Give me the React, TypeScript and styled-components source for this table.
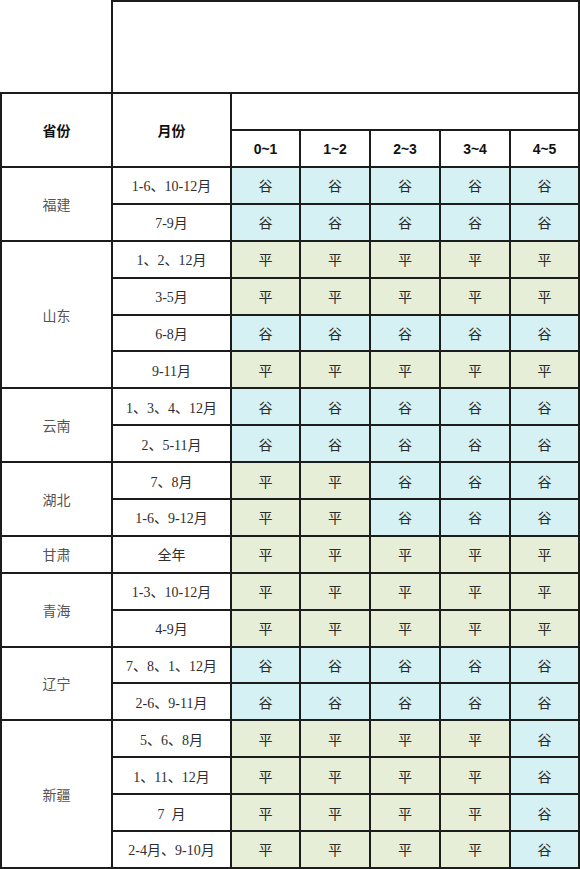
import React from "react";
import styled, { createGlobalStyle } from "styled-components";

const Global = createGlobalStyle`
  html, body { margin: 0; padding: 0; background: #ffffff; }
  body { width: 580px; overflow: hidden; }
`;

const Page = styled.div`
  width: 580px;
  display: flex;
  flex-direction: column;
`;

const TopBox = styled.div`
  margin-left: 111px;
  height: 90px;
  border: 2px solid #1c1c1c;
  border-bottom: none;
  background: #ffffff;
`;

const Grid = styled.div`
  display: grid;
  grid-template-columns: 109px 117px 67px 68px 68px 68px 67px;
  grid-template-rows: 35px 35px repeat(19, 34.9px);
  grid-auto-flow: row;
  gap: 2px;
  padding: 2px;
  background: #1c1c1c;
`;

const Cell = styled.div`
  display: flex;
  align-items: center;
  justify-content: center;
  background: #ffffff;
  font-family: "Liberation Serif", "Noto Sans CJK SC", serif;
  font-size: 14px;
  color: #2e2e2e;
  white-space: pre;
`;

const ValueCell = styled(Cell)<{ $tone: "gu" | "ping" }>`
  background: ${(p) => (p.$tone === "gu" ? "#d5f1f3" : "#e6eed8")};
  color: #2a2a2a;
`;

const HeadCell = styled(Cell)`
  font-family: "Liberation Sans", "Noto Sans CJK SC", sans-serif;
  font-weight: 700;
  color: #111111;
`;

const TallHead = styled(HeadCell)`
  grid-row: span 2;
`;

const WideHead = styled(HeadCell)`
  grid-column: span 5;
`;

const Province = styled(Cell)<{ $rows: number }>`
  grid-column: 1;
  grid-row: span ${(p) => p.$rows};
  color: #555555;
`;

const MonthCell = styled(Cell)`
  grid-column: 2;
`;

type Group = { name: string; rows: { month: string; vals: string[] }[] };

const G = "谷";
const P = "平";
const all = (v: string) => [v, v, v, v, v];

const data: Group[] = [
  {
    name: "福建",
    rows: [
      { month: "1-6、10-12月", vals: all(G) },
      { month: "7-9月", vals: all(G) },
    ],
  },
  {
    name: "山东",
    rows: [
      { month: "1、2、12月", vals: all(P) },
      { month: "3-5月", vals: all(P) },
      { month: "6-8月", vals: all(G) },
      { month: "9-11月", vals: all(P) },
    ],
  },
  {
    name: "云南",
    rows: [
      { month: "1、3、4、12月", vals: all(G) },
      { month: "2、5-11月", vals: all(G) },
    ],
  },
  {
    name: "湖北",
    rows: [
      { month: "7、8月", vals: [P, P, G, G, G] },
      { month: "1-6、9-12月", vals: [P, P, G, G, G] },
    ],
  },
  { name: "甘肃", rows: [{ month: "全年", vals: all(P) }] },
  {
    name: "青海",
    rows: [
      { month: "1-3、10-12月", vals: all(P) },
      { month: "4-9月", vals: all(P) },
    ],
  },
  {
    name: "辽宁",
    rows: [
      { month: "7、8、1、12月", vals: all(G) },
      { month: "2-6、9-11月", vals: all(G) },
    ],
  },
  {
    name: "新疆",
    rows: [
      { month: "5、6、8月", vals: [P, P, P, P, G] },
      { month: "1、11、12月", vals: [P, P, P, P, G] },
      { month: "7\u2002月", vals: [P, P, P, P, G] },
      { month: "2-4月、9-10月", vals: [P, P, P, P, G] },
    ],
  },
];

const hours = ["0~1", "1~2", "2~3", "3~4", "4~5"];

export default function App() {
  return (
    <>
      <Global />
      <Page>
        <TopBox />
        <Grid>
          <TallHead>省份</TallHead>
          <TallHead>月份</TallHead>
          <WideHead />
          {hours.map((h) => (
            <HeadCell key={h}>{h}</HeadCell>
          ))}
          {data.map((g) => (
            <React.Fragment key={g.name}>
              <Province $rows={g.rows.length}>{g.name}</Province>
              {g.rows.map((r) => (
                <React.Fragment key={r.month}>
                  <MonthCell>{r.month}</MonthCell>
                  {r.vals.map((v, vi) => (
                    <ValueCell key={vi} $tone={v === G ? "gu" : "ping"}>
                      {v}
                    </ValueCell>
                  ))}
                </React.Fragment>
              ))}
            </React.Fragment>
          ))}
        </Grid>
      </Page>
    </>
  );
}
